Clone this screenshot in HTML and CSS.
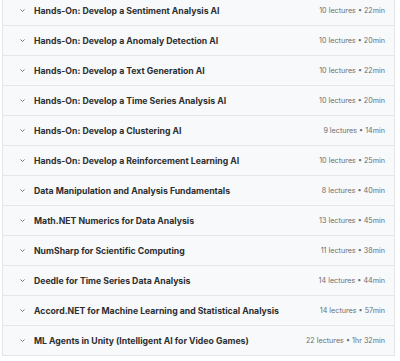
FILE: index.html
```html
<!DOCTYPE html>
<html lang="en">

<head>
  <meta charset="UTF-8">
  <meta name="viewport" content="width=device-width, initial-scale=1.0">
  <title>Course content</title>
  <link rel="stylesheet" href="styles.css">
</head>

<body>
  <div class="curriculum">
    <div class="section">
      <svg class="chevron" viewBox="0 0 10 6"><path d="M1 1l4 4 4-4" /></svg>
      <span class="section-title">Hands-On: Develop a Sentiment Analysis AI</span>
      <span class="section-meta">10 lectures • 22min</span>
    </div>
    <div class="section">
      <svg class="chevron" viewBox="0 0 10 6"><path d="M1 1l4 4 4-4" /></svg>
      <span class="section-title">Hands-On: Develop a Anomaly Detection AI</span>
      <span class="section-meta">10 lectures • 20min</span>
    </div>
    <div class="section">
      <svg class="chevron" viewBox="0 0 10 6"><path d="M1 1l4 4 4-4" /></svg>
      <span class="section-title">Hands-On: Develop a Text Generation AI</span>
      <span class="section-meta">10 lectures • 22min</span>
    </div>
    <div class="section">
      <svg class="chevron" viewBox="0 0 10 6"><path d="M1 1l4 4 4-4" /></svg>
      <span class="section-title">Hands-On: Develop a Time Series Analysis AI</span>
      <span class="section-meta">10 lectures • 20min</span>
    </div>
    <div class="section">
      <svg class="chevron" viewBox="0 0 10 6"><path d="M1 1l4 4 4-4" /></svg>
      <span class="section-title">Hands-On: Develop a Clustering AI</span>
      <span class="section-meta">9 lectures • 14min</span>
    </div>
    <div class="section">
      <svg class="chevron" viewBox="0 0 10 6"><path d="M1 1l4 4 4-4" /></svg>
      <span class="section-title">Hands-On: Develop a Reinforcement Learning AI</span>
      <span class="section-meta">10 lectures • 25min</span>
    </div>
    <div class="section">
      <svg class="chevron" viewBox="0 0 10 6"><path d="M1 1l4 4 4-4" /></svg>
      <span class="section-title">Data Manipulation and Analysis Fundamentals</span>
      <span class="section-meta">8 lectures • 40min</span>
    </div>
    <div class="section">
      <svg class="chevron" viewBox="0 0 10 6"><path d="M1 1l4 4 4-4" /></svg>
      <span class="section-title">Math.NET Numerics for Data Analysis</span>
      <span class="section-meta">13 lectures • 45min</span>
    </div>
    <div class="section">
      <svg class="chevron" viewBox="0 0 10 6"><path d="M1 1l4 4 4-4" /></svg>
      <span class="section-title">NumSharp for Scientific Computing</span>
      <span class="section-meta">11 lectures • 38min</span>
    </div>
    <div class="section">
      <svg class="chevron" viewBox="0 0 10 6"><path d="M1 1l4 4 4-4" /></svg>
      <span class="section-title">Deedle for Time Series Data Analysis</span>
      <span class="section-meta">14 lectures • 44min</span>
    </div>
    <div class="section">
      <svg class="chevron" viewBox="0 0 10 6"><path d="M1 1l4 4 4-4" /></svg>
      <span class="section-title">Accord.NET for Machine Learning and Statistical Analysis</span>
      <span class="section-meta">14 lectures • 57min</span>
    </div>
    <div class="section">
      <svg class="chevron" viewBox="0 0 10 6"><path d="M1 1l4 4 4-4" /></svg>
      <span class="section-title">ML Agents in Unity (Intelligent AI for Video Games)</span>
      <span class="section-meta">22 lectures • 1hr 32min</span>
    </div>
  </div>
</body>

</html>
```

FILE: styles.css
```css
body {
  margin: 0;
  background: #fff;
  font-family: "Inter", "Liberation Sans", sans-serif;
  overflow: hidden;
}

.curriculum {
  margin: -4px 5px 0 2px;
  border-left: 1px solid #e4e7ea;
  border-right: 1px solid #e4e7ea;
}

.section {
  display: flex;
  align-items: center;
  height: 29px;
  padding: 0 9px 0 17px;
  background: #f7f9fa;
  border-bottom: 1px solid #e4e7ea;
}

.chevron {
  width: 5px;
  height: 3px;
  margin-right: 9px;
  fill: none;
  stroke: #555a5e;
  stroke-width: 1.6;
  flex-shrink: 0;
}

.section-title {
  flex: 1;
  font-size: 8.7px;
  font-weight: 700;
  color: #2d2f31;
  white-space: nowrap;
}

.section-meta {
  font-size: 7.2px;
  color: #6a6f73;
  white-space: nowrap;
}
```
